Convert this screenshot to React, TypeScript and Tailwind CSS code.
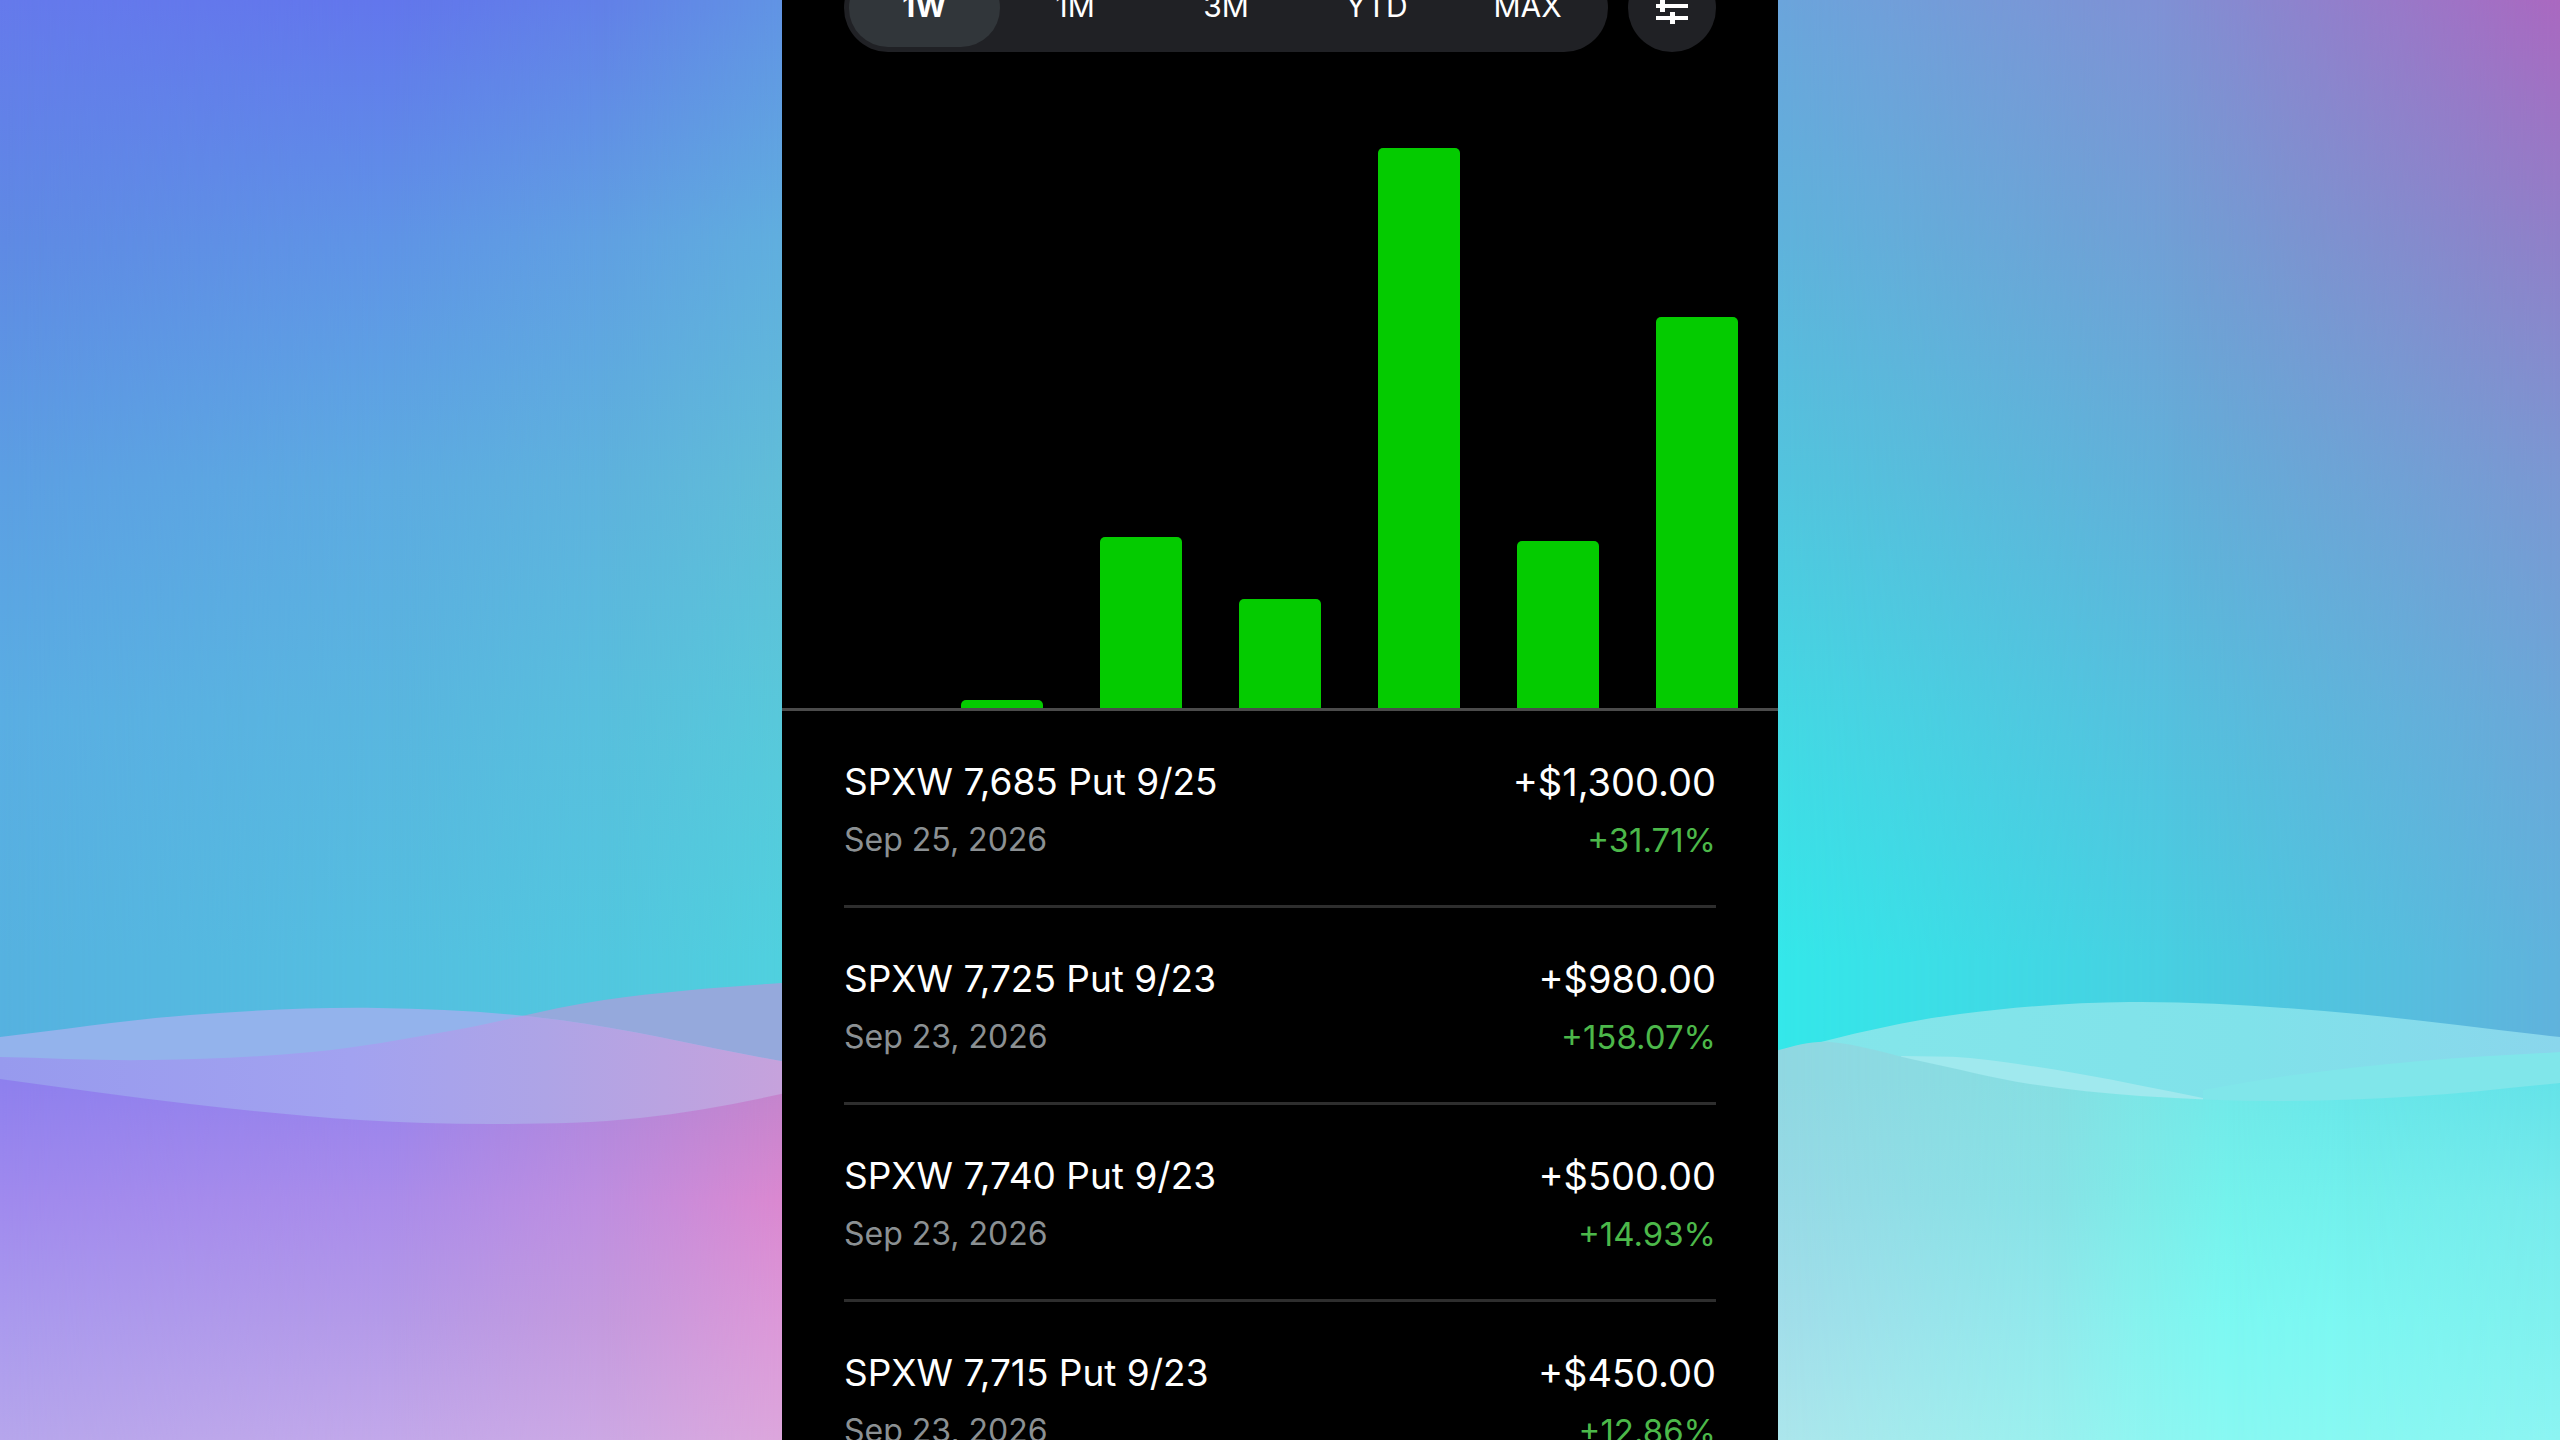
import React, { useState } from "react";

type Point = [number, number];

interface MeshColumn {
  x: number;
  stops: string[];
}

interface Trade {
  id: number;
  contract: string;
  date: string;
  amount: string;
  percent: string;
}

const ranges = ["1W", "1M", "3M", "YTD", "MAX"];

// One entry per day, as a share of the tallest bar
const dailyGains = [0, 1.5, 30.6, 19.5, 100, 29.9, 69.9];

const trades: Trade[] = [
  {
    id: 1,
    contract: "SPXW 7,685 Put 9/25",
    date: "Sep 25, 2026",
    amount: "+$1,300.00",
    percent: "+31.71%",
  },
  {
    id: 2,
    contract: "SPXW 7,725 Put 9/23",
    date: "Sep 23, 2026",
    amount: "+$980.00",
    percent: "+158.07%",
  },
  {
    id: 3,
    contract: "SPXW 7,740 Put 9/23",
    date: "Sep 23, 2026",
    amount: "+$500.00",
    percent: "+14.93%",
  },
  {
    id: 4,
    contract: "SPXW 7,715 Put 9/23",
    date: "Sep 23, 2026",
    amount: "+$450.00",
    percent: "+12.86%",
  },
];

const sky: MeshColumn[] = [
  { x: 0, stops: ["#657aec", "#5f8ae4", "#5c9fe3", "#5aaee3", "#56b2e0"] },
  { x: 390, stops: ["#6276ec", "#5f94e6", "#5dabe1", "#59b6df", "#54bfe0"] },
  { x: 600, stops: ["#6280e8", "#60a0e2", "#5eb2dd", "#58bfdd", "#52c7df"] },
  { x: 780, stops: ["#6193e4", "#60aede", "#60bdd8", "#58c8da", "#50d0de"] },
  { x: 1778, stops: ["#6ba5dc", "#5fb3dc", "#52c5de", "#43d9e4", "#34e8ea"] },
  { x: 2170, stops: ["#8090d4", "#719fd5", "#62afd9", "#55c0de", "#48cfe1"] },
  { x: 2560, stops: ["#aa68c0", "#907fc8", "#7b97d2", "#6ba7d8", "#60b2dc"] },
];

const ground: MeshColumn[] = [
  { x: 0, stops: ["#8e80ee", "#a08aee", "#aa9aee", "#b6a6ec"] },
  { x: 390, stops: ["#9682ec", "#aa8cea", "#b49ae8", "#c2a8ea"] },
  { x: 600, stops: ["#ae86dc", "#be8ee0", "#c49ade", "#cca8e4"] },
  { x: 780, stops: ["#c284cc", "#da88d0", "#dc98d8", "#dca6dc"] },
  { x: 1778, stops: ["#90d8e2", "#98dae6", "#a2deea", "#ace6ec"] },
  { x: 2050, stops: ["#86dee2", "#88e2e6", "#92e9ec", "#9af0ee"] },
  { x: 2140, stops: ["#7ce5e6", "#7eebe8", "#86f2ee", "#8ff5f1"] },
  { x: 2230, stops: ["#70e8e8", "#74f2ec", "#7cf8f2", "#88f8f2"] },
  { x: 2340, stops: ["#68e6e9", "#72f0ec", "#7cf7f2", "#88f8f2"] },
  { x: 2560, stops: ["#64e2e8", "#78eaec", "#80f0ee", "#8cf4f2"] },
];

const waveA: Point[] = [[0, 1037], [190, 1015], [378, 1008], [560, 1020], [781, 1061], [900, 1080]];
const waveB: Point[] = [[0, 1057], [150, 1060], [312, 1052], [450, 1031], [604, 1000], [781, 983], [900, 980]];
const waveD: Point[] = [[1700, 1080], [1825, 1041], [1960, 1014], [2130, 1002], [2324, 1011], [2560, 1037]];
const waveBand: Point[] = [[2203, 1090], [2294, 1075], [2420, 1061], [2560, 1052]];
const waveGlow: Point[] = [[1901, 1056], [1970, 1058], [2080, 1074], [2203, 1098]];
const groundEdge: Point[] = [
  [0, 1079], [190, 1104], [360, 1120], [504, 1124], [640, 1118], [781, 1094], [900, 1060],
  [1660, 1090], [1779, 1050], [1830, 1042], [1920, 1061], [2030, 1084], [2140, 1096],
  [2280, 1101], [2420, 1096], [2560, 1083],
];

// Smooth curve through the points, closed along the bottom at floorY
const wavePath = (points: Point[], floorY = 1440): string => {
  const first = points[0];
  const last = points[points.length - 1];
  let d = `M${first[0]} ${floorY}L${first[0]} ${first[1]}`;
  for (let i = 0; i < points.length - 1; i++) {
    const prev = points[Math.max(i - 1, 0)];
    const a = points[i];
    const b = points[i + 1];
    const next = points[Math.min(i + 2, points.length - 1)];
    // Control points sit a third of the way along, whatever the spacing
    const third = (b[0] - a[0]) / 3;
    const slopeA = (b[1] - prev[1]) / (b[0] - prev[0]);
    const slopeB = (next[1] - a[1]) / (next[0] - a[0]);
    d += `C${a[0] + third} ${a[1] + slopeA * third} ${b[0] - third} ${
      b[1] - slopeB * third
    } ${b[0]} ${b[1]}`;
  }
  return `${d}L${last[0]} ${floorY}Z`;
};

// Each column fades in over the one before it, which blends the whole grid
const Mesh: React.FC<{
  id: string;
  columns: MeshColumn[];
  top: number;
  bottom: number;
}> = ({ id, columns, top, bottom }) => (
  <>
    {columns.map((column, i) => {
      const from = i === 0 ? -1 : columns[i - 1].x;
      return (
        <g key={column.x}>
          <linearGradient
            id={`${id}-color-${i}`}
            gradientUnits="userSpaceOnUse"
            x1="0"
            x2="0"
            y1={top}
            y2={bottom}
          >
            {column.stops.map((color, n) => (
              <stop
                key={n}
                offset={n / (column.stops.length - 1)}
                stopColor={color}
              />
            ))}
          </linearGradient>
          <linearGradient
            id={`${id}-fade-${i}`}
            gradientUnits="userSpaceOnUse"
            x1={from}
            x2={column.x}
            y1="0"
            y2="0"
          >
            <stop offset="0" stopColor="#fff" stopOpacity="0" />
            <stop offset="1" stopColor="#fff" />
          </linearGradient>
          <mask
            id={`${id}-mask-${i}`}
            maskUnits="userSpaceOnUse"
            x="0"
            y="0"
            width="2560"
            height="1440"
          >
            <rect width="2560" height="1440" fill={`url(#${id}-fade-${i})`} />
          </mask>
          <rect
            width="2560"
            height="1440"
            fill={`url(#${id}-color-${i})`}
            mask={`url(#${id}-mask-${i})`}
          />
        </g>
      );
    })}
  </>
);

const Wallpaper: React.FC = () => (
  <svg
    className="absolute inset-0 h-full w-full"
    viewBox="0 0 2560 1440"
    preserveAspectRatio="xMidYMid slice"
    aria-hidden="true"
  >
    <defs>
      <linearGradient id="lilac" gradientUnits="userSpaceOnUse" x1="0" x2="781">
        <stop offset="0" stopColor="#979aee" />
        <stop offset="0.45" stopColor="#a2a2f0" />
        <stop offset="0.7" stopColor="#aea4e6" />
        <stop offset="1" stopColor="#c6a2dc" />
      </linearGradient>
      <linearGradient id="foam" gradientUnits="userSpaceOnUse" x1="1779" x2="2560">
        <stop offset="0" stopColor="#84e6ea" />
        <stop offset="0.6" stopColor="#80e2ea" />
        <stop offset="1" stopColor="#8ad6ec" />
      </linearGradient>
      <clipPath id="wave-b-clip">
        <path d={wavePath(waveB)} />
      </clipPath>
      <mask
        id="ground-mask"
        maskUnits="userSpaceOnUse"
        x="0"
        y="0"
        width="2560"
        height="1440"
      >
        <path d={wavePath(groundEdge)} fill="#fff" />
      </mask>
    </defs>
    <Mesh id="sky" columns={sky} top={0} bottom={960} />
    <path d={wavePath(waveB)} fill="#95a9dc" />
    <path d={wavePath(waveA)} fill="#93b3ec" />
    <path d={wavePath(waveA)} fill="url(#lilac)" clipPath="url(#wave-b-clip)" />
    <path d={wavePath(waveD)} fill="url(#foam)" />
    <path d={wavePath(waveBand, 1120)} fill="#80e6ea" />
    <path d={wavePath(waveGlow, 1120)} fill="#a0e9ee" />
    <g mask="url(#ground-mask)">
      <Mesh id="ground" columns={ground} top={1080} bottom={1440} />
    </g>
  </svg>
);

const FilterIcon: React.FC = () => (
  <svg width="32" height="36" viewBox="0 0 32 36" fill="#fff" aria-hidden="true">
    <rect y="4" width="32" height="4" />
    <rect x="20" width="5" height="12" />
    <rect y="16" width="32" height="4" />
    <rect x="4" y="12" width="5" height="12" />
    <rect y="28" width="32" height="4" />
    <rect x="14" y="24" width="5" height="12" />
  </svg>
);

const App: React.FC = () => {
  const [range, setRange] = useState("1W");

  return (
    <div className="relative flex h-screen justify-center overflow-hidden font-['Inter',sans-serif]">
      <Wallpaper />

      <main className="relative min-h-screen w-full max-w-[996px] overflow-hidden bg-black text-white">
        {/* Range picker, scrolled partly past the top edge */}
        <div className="-mt-9 flex gap-5 px-[62px]">
          <div className="flex h-[88px] flex-1 rounded-full bg-[#202125] p-[5px]">
            {ranges.map((item) => (
              <button
                key={item}
                type="button"
                aria-pressed={item === range}
                onClick={() => setRange(item)}
                className={`flex-1 rounded-full pb-1 text-[30px] ${
                  item === range ? "bg-[#31363a] font-bold" : "font-normal"
                }`}
              >
                {item}
              </button>
            ))}
          </div>
          <button
            type="button"
            aria-label="Filter"
            className="flex size-[88px] items-center justify-center rounded-full bg-[#202125] pb-1"
          >
            <FilterIcon />
          </button>
        </div>

        {/* Daily gains */}
        <div className="mt-24 flex h-[563px] items-end justify-between border-b-3 border-[#4b4b4b] px-10">
          {dailyGains.map((gain, i) => (
            <div
              key={i}
              className="w-[82px] rounded-t-[5px] bg-[#04cb00]"
              style={{ height: `${gain}%` }}
            />
          ))}
        </div>

        <ul className="px-[62px]">
          {trades.map((trade) => (
            <li
              key={trade.id}
              className="flex h-[197px] justify-between border-b-3 border-[#2e2e2e] pt-[47px]"
            >
              <div>
                <p className="text-[37px] leading-[48px]">{trade.contract}</p>
                <p className="mt-2.5 text-[32px] leading-[48px] text-[#8b9093]">
                  {trade.date}
                </p>
              </div>
              <div className="text-right">
                <p className="text-[38px] leading-[48px]">{trade.amount}</p>
                <p className="mt-2.5 text-[33px] leading-[48px] text-[#4cb84a]">
                  {trade.percent}
                </p>
              </div>
            </li>
          ))}
        </ul>
      </main>
    </div>
  );
};

export default App;
